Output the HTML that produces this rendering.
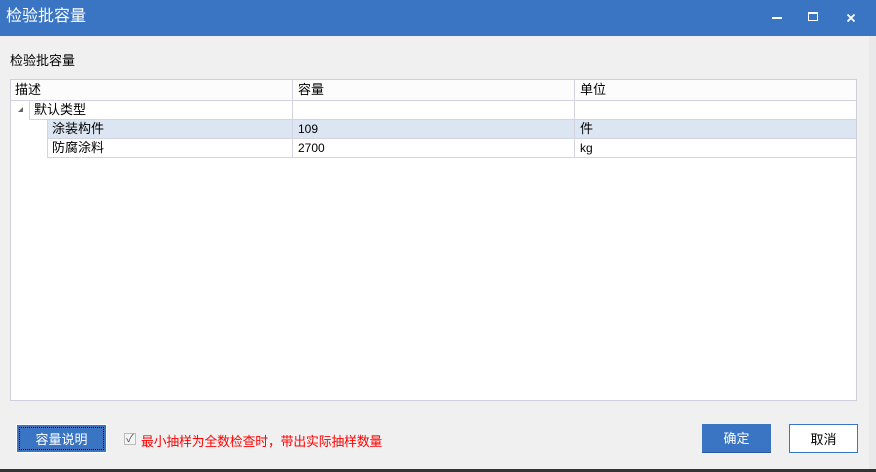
<!DOCTYPE html>
<html><head><meta charset="utf-8"><style>
*{margin:0;padding:0;box-sizing:border-box}
body{width:876px;height:472px;background:#f0f0f0;position:relative;overflow:hidden;font-family:"Liberation Sans","Microsoft YaHei","Noto Sans CJK SC",sans-serif;font-size:12px;color:#000}
.title{position:absolute;left:0;top:0;width:876px;height:36px;background:#3a75c4;color:#fff;font-size:16px;line-height:34px;padding-left:6px}
.ab{position:absolute}
.grid{position:absolute;left:10px;top:79px;width:847px;height:322px;background:#fff;border:1px solid #cfcfdc}
.r{position:absolute;height:19px;border-bottom:1px solid #d4d4e0;line-height:18px}
.c{position:absolute;top:0;height:100%;border-left:1px solid #d4d4e0;padding-left:5px}
.btn{position:absolute;top:424px;height:29px;text-align:center;line-height:29px;font-size:13px}
</style></head><body>
<div class="title">检验批容量</div>
<svg class="ab" style="left:846px;top:13px" width="10" height="10" viewBox="0 0 10 10"><path d="M1.5 1.5L8.5 8.5M8.5 1.5L1.5 8.5" stroke="#fff" stroke-width="1.8"/></svg>
<div class="ab" style="left:772px;top:17px;width:10px;height:2px;background:#fff"></div>
<div class="ab" style="left:808px;top:12px;width:10px;height:9px;border:1.5px solid #fff;border-top-width:2px"></div>
<div class="ab" style="left:869px;top:36px;width:7px;height:436px;background:#e9e9ec"></div>
<div class="ab" style="left:10px;top:50px;font-size:13px">检验批容量</div>
<div class="grid">
 <div class="r" style="top:0;left:0;width:845px;height:21px;background:#fdfcfd;line-height:20px"><span style="padding-left:4px;font-size:13px">描述</span><div class="c" style="left:281px;font-size:13px">容量</div><div class="c" style="left:563px;font-size:13px">单位</div></div>
 <span class="ab" style="left:7px;top:27px;width:0;height:0;border-left:5px solid transparent;border-bottom:5px solid #666"></span>
 <div class="r" style="top:21px;left:18px;width:827px"><div class="c" style="left:0;font-size:13px;padding-left:4px">默认类型</div><div class="c" style="left:263px"></div><div class="c" style="left:545px"></div></div>
 <div class="r" style="top:40px;left:36px;width:809px;background:#dce6f2"><div class="c" style="left:0;font-size:13px;padding-left:4px">涂装构件</div><div class="c" style="left:245px">109</div><div class="c" style="left:527px;font-size:13px">件</div></div>
 <div class="r" style="top:59px;left:36px;width:809px"><div class="c" style="left:0;font-size:13px;padding-left:4px">防腐涂料</div><div class="c" style="left:245px">2700</div><div class="c" style="left:527px">kg</div></div>
</div>
<div class="btn" style="left:16px;width:91px;background:#3a75c4;color:#fff;border:1px solid #fff;outline:1px dotted #000;outline-offset:-4px">容量说明</div>
<div class="ab" style="left:124px;top:433px;width:12px;height:12px;border:1px solid #bbb;background:#f4f4f4;color:#555;font-size:11px;line-height:10px;text-align:center">✓</div>
<div class="ab" style="left:141px;top:431px;color:#f00;font-size:12.8px;letter-spacing:-0.1px">最小抽样为全数检查时，带出实际抽样数量</div>
<div class="btn" style="left:702px;width:69px;background:#3a75c4;color:#fff;border-bottom:1px solid #2a5a9c">确定</div>
<div class="btn" style="left:789px;width:69px;background:#fff;border:1px solid #3a75c4">取消</div>
<div class="ab" style="left:0;top:469px;width:876px;height:3px;background:#333"></div>
</body></html>
